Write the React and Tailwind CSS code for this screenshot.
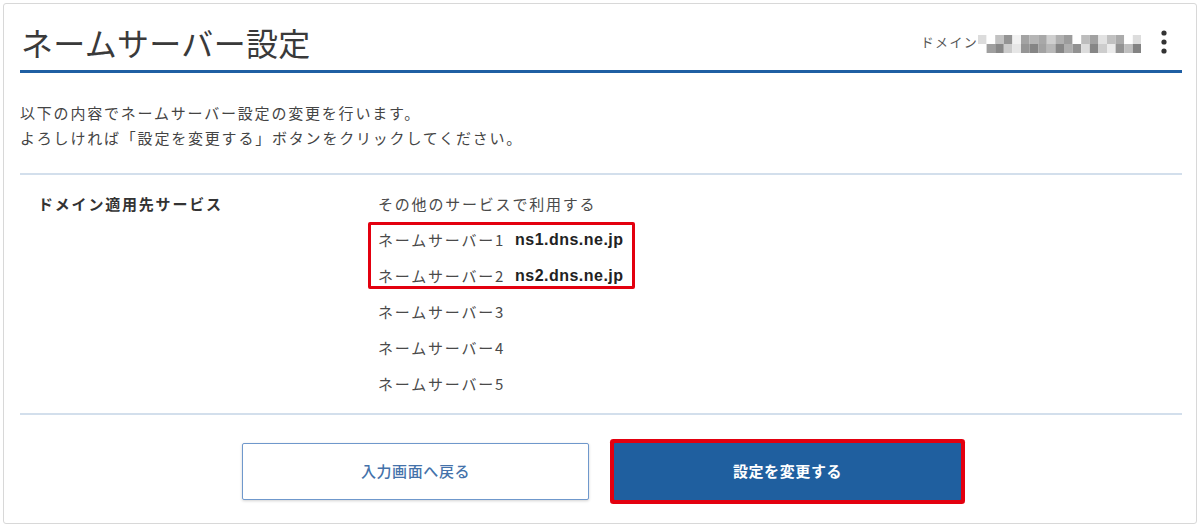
import React from "react";

const font = { fontFamily: '"Noto Sans CJK JP", "Liberation Sans", sans-serif' };

// モザイク(ドメイン名の目隠し)
const mosaic = [
  ["#dcdcdc", "#ffffff", "#c2c2c2", "#949494", "#f2f2f2", "#a3a3a3", "#b5b5b5", "#a8a8a8", "#cfcfcf", "#b0b0b0", "#9c9c9c", "#ffffff", "#bdbdbd", "#a1a1a1", "#e2e2e2", "#c1c1c1", "#ababab", "#ffffff", "#dddddd"],
  ["#ffffff", "#9f9f9f", "#888888", "#cbcbcb", "#e6e6e6", "#959595", "#858585", "#a2a2a2", "#b8b8b8", "#878787", "#aeaeae", "#929292", "#dcdcdc", "#868686", "#cdcdcd", "#ebebeb", "#939393", "#bfbfbf", "#838383"],
];

const servers = [
  { label: "ネームサーバー1", value: "ns1.dns.ne.jp" },
  { label: "ネームサーバー2", value: "ns2.dns.ne.jp" },
  { label: "ネームサーバー3", value: "" },
  { label: "ネームサーバー4", value: "" },
  { label: "ネームサーバー5", value: "" },
];

const App = () => {
  return (
    <div className="w-[1200px] h-[528px] bg-white p-[3px]" style={font}>
      <div className="h-[521px] border border-[#d8d8d8] rounded-[3px] pl-4 pr-[14px]">
        {/* ヘッダー */}
        <div className="h-[66px] pt-[10px] flex items-center justify-between">
          <h1 className="text-[32px] leading-[40px] text-[#3a3a3a] font-normal pl-[1px] tracking-[0.01em]">ネームサーバー設定</h1>
          <div className="flex items-center pr-[14px]">
            <span className="text-[13px] text-[#555] tracking-[0.1em]">ドメイン</span>
            <svg width="163" height="18" viewBox="0 0 163 18" className="mt-[4px]">
              {mosaic.map((row, r) =>
                row.map((c, i) => (
                  <rect key={`${r}-${i}`} x={i * 8.6} y={r * 9} width="8.6" height="9" fill={c} />
                ))
              )}
            </svg>
            <svg width="8" height="24" viewBox="0 0 8 24" className="ml-[19px]">
              <circle cx="4" cy="3" r="2.6" fill="#333" />
              <circle cx="4" cy="12" r="2.6" fill="#333" />
              <circle cx="4" cy="21" r="2.6" fill="#333" />
            </svg>
          </div>
        </div>
        <div className="h-[3px] bg-[#1f5fa3]" />

        {/* 説明文 */}
        <div className="mt-[27px] mb-[23px] text-[15px] leading-[25px] tracking-[0.12em] text-[#444]">
          <p>以下の内容でネームサーバー設定の変更を行います。</p>
          <p>よろしければ「設定を変更する」ボタンをクリックしてください。</p>
        </div>

        {/* 確認内容 */}
        <div className="border-t-2 border-[#d3dfec] pt-[11px] pb-[11px] flex pl-[18px]">
          <div className="w-[340px] h-[36px] flex items-center text-[15px] font-bold tracking-[0.12em] text-[#333]">
            ドメイン適用先サービス
          </div>
          <div className="relative text-[15px] tracking-[0.12em] text-[#4a4a4a]">
            <div className="h-[36px] flex items-center">その他のサービスで利用する</div>
            {servers.map((s) => (
              <div key={s.label} className="h-[36px] flex items-center">
                <span className="w-[137px]">{s.label}</span>
                {s.value && (
                  <span className="font-bold text-[#222] tracking-[0.03em]" style={{ fontFamily: '"Liberation Sans", sans-serif', fontSize: "16px" }}>
                    {s.value}
                  </span>
                )}
              </div>
            ))}
            {/* 注目枠 */}
            <div className="absolute left-[-10px] top-[36px] w-[267px] h-[67px] border-[3px] border-[#e3000f] rounded-[2px]" />
          </div>
        </div>

        {/* ボタン */}
        <div className="border-t-2 border-[#d3dfec] pt-[28px] flex justify-center gap-[25px] pl-[1px]">
          <button className="w-[347px] h-[57px] bg-white border-[1.5px] border-[#6f98cc] rounded-[2px] shadow-[0_1px_3px_rgba(0,0,0,0.18)] text-[15px] font-medium text-[#4472aa] tracking-[0.04em]">
            入力画面へ戻る
          </button>
          <button className="w-[347px] h-[57px] bg-[#1f5f9f] rounded-[1px] ring-4 ring-[#e3000f] text-[15px] font-bold text-white tracking-[0.04em]">
            設定を変更する
          </button>
        </div>
      </div>
    </div>
  );
};

export default App;
